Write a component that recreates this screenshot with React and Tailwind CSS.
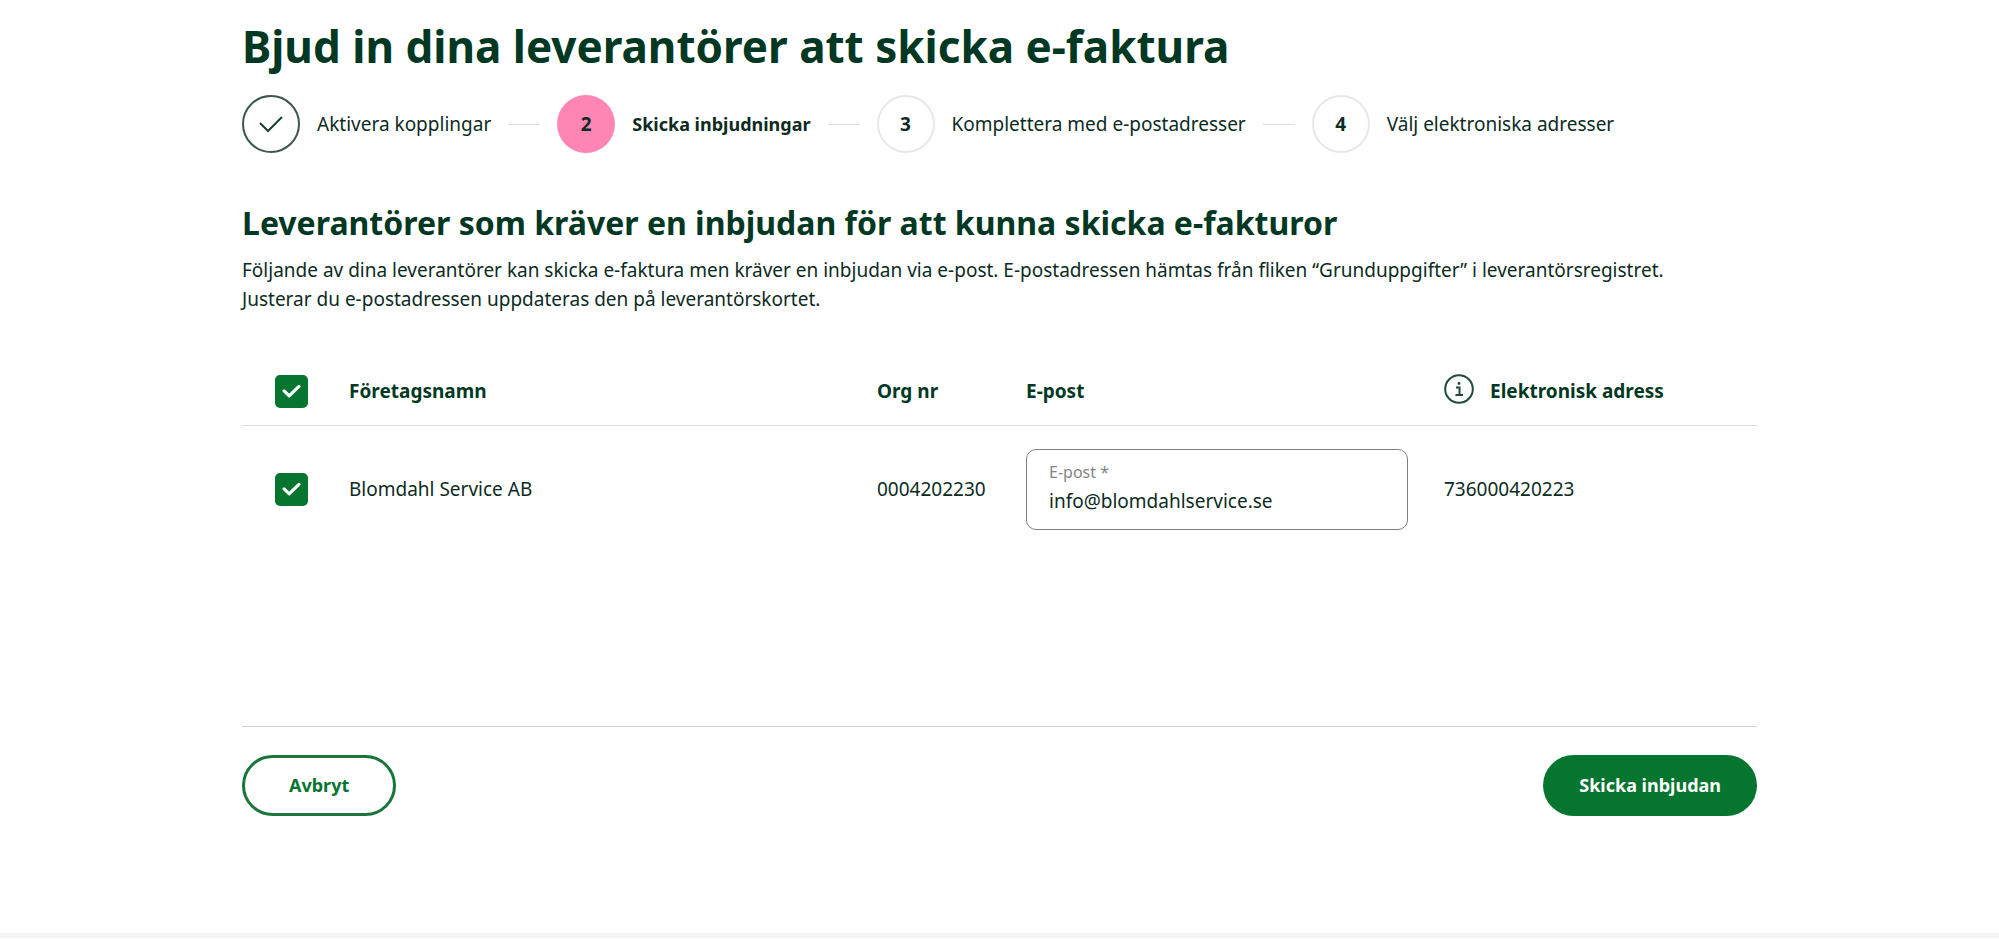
import React, { useState } from 'react';

const steps = [
  { id: 1, label: 'Aktivera kopplingar', status: 'done' },
  { id: 2, label: 'Skicka inbjudningar', status: 'active' },
  { id: 3, label: 'Komplettera med e-postadresser', status: 'upcoming' },
  { id: 4, label: 'Välj elektroniska adresser', status: 'upcoming' },
];

const initialSuppliers = [
  {
    id: 1,
    name: 'Blomdahl Service AB',
    orgNr: '0004202230',
    email: 'info@blomdahlservice.se',
    address: '736000420223',
    selected: true,
  },
];

const circleStyles = {
  done: 'border-2 border-[#3d5650]',
  active: 'bg-[#ff85b5]',
  upcoming: 'border-2 border-[#e8e8e8]',
};

function Step({ step, isLast }) {
  return (
    <li
      className="flex items-center gap-[17px]"
      aria-current={step.status === 'active' ? 'step' : undefined}
    >
      <span
        className={`w-[58px] h-[58px] flex-shrink-0 rounded-full flex items-center justify-center font-bold ${circleStyles[step.status]}`}
      >
        {step.status === 'done' ? (
          <svg className="w-6 h-6" viewBox="0 0 24 24" fill="none" stroke="#1f3b34" strokeWidth="2">
            <path d="M1 11 9 19 23 5" />
          </svg>
        ) : (
          step.id
        )}
      </span>
      <span className={step.status === 'active' ? 'text-[18px] font-bold' : ''}>{step.label}</span>
      {!isLast && <span className="w-8 h-px bg-[#dcdcdc]" />}
    </li>
  );
}

function Checkbox({ label, checked, onChange }) {
  return (
    <label className="grid w-[33px] h-[33px] cursor-pointer">
      <input
        type="checkbox"
        aria-label={label}
        checked={checked}
        onChange={onChange}
        className="appearance-none col-start-1 row-start-1 w-full h-full rounded-[5px] border-2 border-[#05752f] checked:bg-[#05752f] cursor-pointer"
      />
      {checked && (
        <svg
          className="col-start-1 row-start-1 place-self-center w-[19px] h-[15px] pointer-events-none"
          viewBox="0 0 18 14"
          fill="none"
          stroke="white"
          strokeWidth="3"
          strokeLinecap="round"
          strokeLinejoin="round"
        >
          <path d="M2 6.5 6.8 11.2 16 2.2" />
        </svg>
      )}
    </label>
  );
}

function InfoIcon() {
  return (
    <svg className="w-[30px] h-[30px] mb-1" viewBox="0 0 30 30" fill="none" stroke="#1f4a3d" strokeWidth="2">
      <circle cx="15" cy="15" r="13.8" />
      <path d="M12 13.5h3.5v7M11.5 21h7.5" />
      <circle cx="15" cy="9.5" r="1.4" fill="#1f4a3d" stroke="none" />
    </svg>
  );
}

export default function App() {
  const [suppliers, setSuppliers] = useState(initialSuppliers);
  const allSelected = suppliers.every(s => s.selected);

  const update = (id, changes) =>
    setSuppliers(suppliers.map(s => (s.id === id ? { ...s, ...changes } : s)));

  const toggleAll = () =>
    setSuppliers(suppliers.map(s => ({ ...s, selected: !allSelected })));

  return (
    <div className="min-h-screen flex flex-col bg-white text-[#0c2b23] text-[19px] leading-[29px] font-['Noto_Sans',sans-serif]">
      <main className="flex-1 w-full max-w-[1515px] mx-auto">
        <h1 className="pt-4 text-[44px] leading-[60px] font-bold text-[#003824]">
          Bjud in dina leverantörer att skicka e-faktura
        </h1>

        {/* Steg */}
        <ol className="mt-[19px] flex items-center gap-[17px] whitespace-nowrap">
          {steps.map((step, i) => (
            <Step key={step.id} step={step} isLast={i === steps.length - 1} />
          ))}
        </ol>

        <h2 className="mt-12 text-[32px] leading-[44px] font-bold text-[#003824]">
          Leverantörer som kräver en inbjudan för att kunna skicka e-fakturor
        </h2>
        <p className="mt-[11px] max-w-[1450px]">
          Följande av dina leverantörer kan skicka e-faktura men kräver en inbjudan via e-post.
          E-postadressen hämtas från fliken “Grunduppgifter” i leverantörsregistret. Justerar du
          e-postadressen uppdateras den på leverantörskortet.
        </p>

        {/* Leverantörer */}
        <table className="mt-11 w-full table-fixed text-left">
          <colgroup>
            <col className="w-[107px]" />
            <col />
            <col className="w-[149px]" />
            <col className="w-[418px]" />
            <col className="w-[313px]" />
          </colgroup>
          <thead>
            <tr className="h-[67px] border-b border-[#dcdcdc] text-[#003824]">
              <th className="pl-[33px]">
                <Checkbox label="Markera alla" checked={allSelected} onChange={toggleAll} />
              </th>
              <th>Företagsnamn</th>
              <th>Org nr</th>
              <th>E-post</th>
              <th>
                <span className="flex items-center gap-4">
                  <InfoIcon /> Elektronisk adress
                </span>
              </th>
            </tr>
          </thead>
          <tbody>
            {suppliers.map(s => (
              <tr key={s.id} className="h-[129px]">
                <td className="pl-[33px]">
                  <Checkbox
                    label={s.name}
                    checked={s.selected}
                    onChange={() => update(s.id, { selected: !s.selected })}
                  />
                </td>
                <td>{s.name}</td>
                <td>{s.orgNr}</td>
                <td>
                  <div className="mr-9 h-[81px] px-[22px] pt-[10px] flex flex-col gap-[3px] border border-[#808080] rounded-[10px]">
                    <label htmlFor={`email-${s.id}`} className="text-base leading-6 text-[#858585]">
                      E-post *
                    </label>
                    <input
                      id={`email-${s.id}`}
                      type="email"
                      value={s.email}
                      onChange={e => update(s.id, { email: e.target.value })}
                      className="w-full outline-none"
                    />
                  </div>
                </td>
                <td>{s.address}</td>
              </tr>
            ))}
          </tbody>
        </table>

        {/* Knappar */}
        <div className="mt-[172px] pt-7 flex items-center justify-between border-t border-[#d2d2d2] text-[18px]">
          <button className="h-[61px] px-11 rounded-full border-[3px] border-[#19753a] text-[#05752f] font-bold">
            Avbryt
          </button>
          <button className="h-[61px] px-9 rounded-full bg-[#05752f] text-white font-bold">
            Skicka inbjudan
          </button>
        </div>
      </main>
      <div className="h-[5px] mb-px bg-[#f4f4f4]" />
    </div>
  );
}
